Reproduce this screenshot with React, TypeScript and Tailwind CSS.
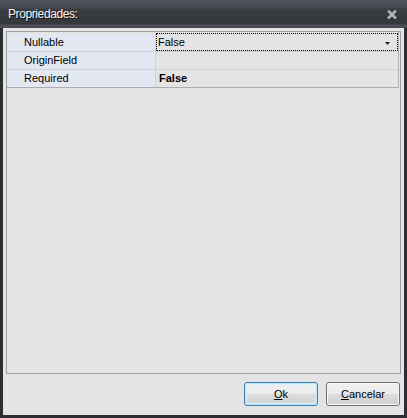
import React from 'react';

const rows = [
  { name: 'Nullable', value: 'False', selected: true, bold: false },
  { name: 'OriginField', value: '', selected: false, bold: false },
  { name: 'Required', value: 'False', selected: false, bold: true },
];

const App: React.FC = () => {
  return (
    <div
      className="w-[407px] h-[418px] flex flex-col bg-[#2c2e32] text-[11px] text-black"
      style={{ fontFamily: '"Liberation Sans", Arial, sans-serif' }}
    >
      {/* Title bar */}
      <div className="h-[28px] shrink-0 flex items-center justify-between pl-[8px] pr-[10px] bg-[linear-gradient(to_bottom,#50535a_0px,#46494f_8px,#393c41_9px,#34373c_24px,#4c4f55_25px,#474a50_28px)]">
        <span className="text-[12px] tracking-[-0.4px] text-[#f4f4f4] [text-shadow:1px_1px_0_#141518]">
          Propriedades:
        </span>
        <svg width="10" height="9" viewBox="0 0 10 9" className="mt-[1px]">
          <path d="M1 0.5 L9 8.5 M9 0.5 L1 8.5" stroke="#aeb4bc" strokeWidth="2.6" />
        </svg>
      </div>

      {/* Body */}
      <div className="flex-1 flex flex-col mx-[3px] mb-[3px] bg-[#e4e4e4] pt-[3px] pl-[3px] pr-[3px]">
        {/* Property grid */}
        <div className="h-[343px] border border-[#a0a0a0] bg-[#e4e4e4]">
          <div className="pt-[2px] border-r border-[#b4b4b4] mr-px">
            {rows.map((r, i) => (
              <div
                key={r.name}
                className={`flex h-[18px] border-b ${i === rows.length - 1 ? 'border-[#acacac]' : 'border-[#cbd3df]'}`}
              >
                <div className="w-[149px] shrink-0 bg-[#e3e7f1] border-r border-[#cbd3df] pl-[17px] flex items-center">
                  {r.name}
                </div>
                <div className="flex-1 relative flex items-center pl-[2px]">
                  {r.selected && (
                    <div className="absolute inset-0 -top-px border border-dotted border-black" />
                  )}
                  <span className={r.bold ? 'font-bold pl-px' : ''}>{r.value}</span>
                  {r.selected && (
                    <svg width="5" height="3" viewBox="0 0 5 3" className="absolute right-[8px] top-[8px]">
                      <path d="M0 0 H5 L2.5 3 Z" fill="#1a1a1a" />
                    </svg>
                  )}
                </div>
              </div>
            ))}
          </div>
        </div>

        {/* Buttons */}
        <div className="flex justify-end gap-[8px] mt-[8px] mr-px">
          <button className="w-[74px] h-[24px] rounded-[3px] border border-[#3c7fb1] shadow-[inset_0_0_0_1px_#bfe6fb,inset_0_0_2px_2px_#d6f0fd] bg-[linear-gradient(to_bottom,#f2f2f2_0%,#ebebeb_50%,#dddddd_50%,#cfcfcf_100%)] text-[11px]">
            <span className="underline">O</span>k
          </button>
          <button className="w-[74px] h-[24px] rounded-[3px] border border-[#707070] shadow-[inset_0_0_0_1px_#f8f8f8] bg-[linear-gradient(to_bottom,#f2f2f2_0%,#ebebeb_50%,#dddddd_50%,#cfcfcf_100%)] text-[11px]">
            <span className="underline">C</span>ancelar
          </button>
        </div>
      </div>
    </div>
  );
};

export default App;
